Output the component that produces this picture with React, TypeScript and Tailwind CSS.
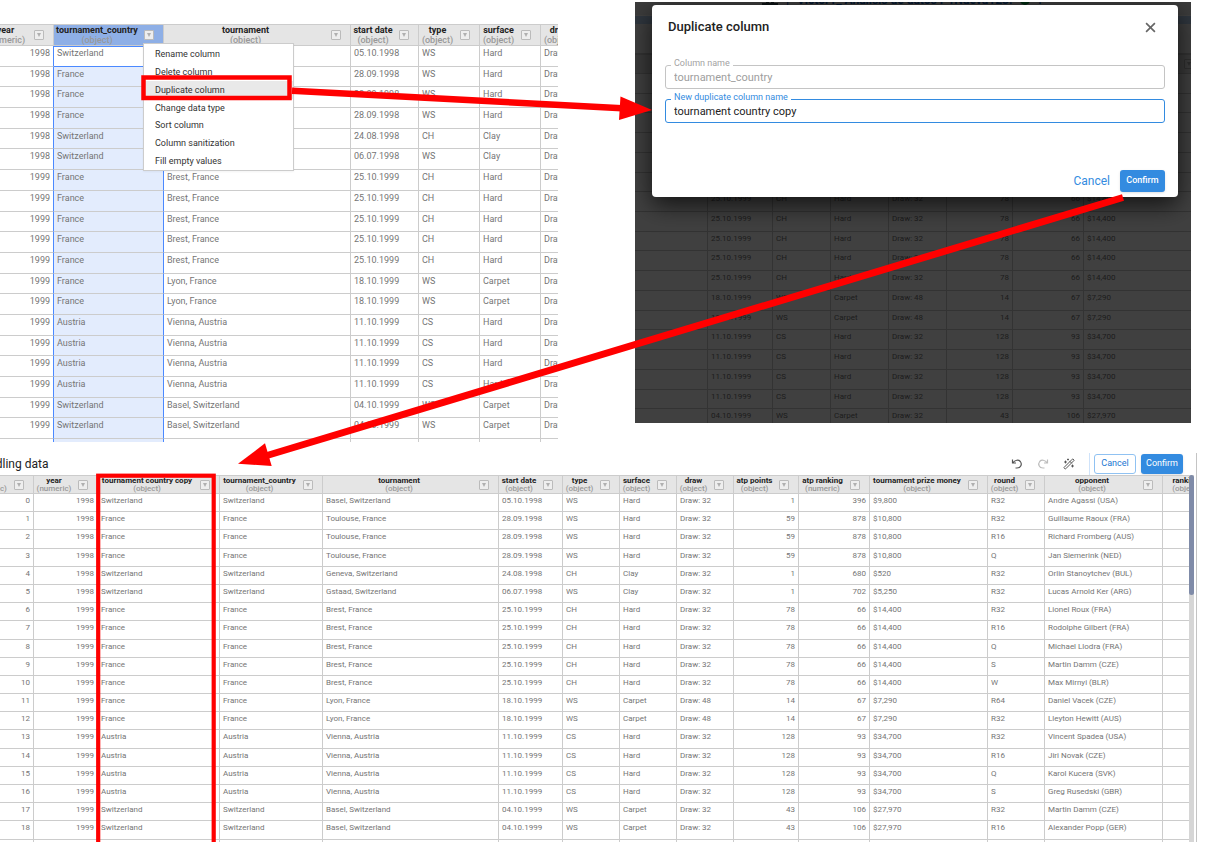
import { useState } from "react"
import { LuWandSparkles } from "react-icons/lu"

type Column = {
  label: string
  kind: "numeric" | "object"
  field: number
  width: number
  right?: boolean
  selected?: boolean
}

// index, year, country, tournament, start date, type, surface, draw, points, ranking, prize, round, opponent
const rows: string[][] = [
  ["0", "1998", "Switzerland", "Basel, Switzerland", "05.10.1998", "WS", "Hard", "Draw: 32", "1", "396", "$9,800", "R32", "Andre Agassi (USA)"],
  ["1", "1998", "France", "Toulouse, France", "28.09.1998", "WS", "Hard", "Draw: 32", "59", "878", "$10,800", "R32", "Guillaume Raoux (FRA)"],
  ["2", "1998", "France", "Toulouse, France", "28.09.1998", "WS", "Hard", "Draw: 32", "59", "878", "$10,800", "R16", "Richard Fromberg (AUS)"],
  ["3", "1998", "France", "Toulouse, France", "28.09.1998", "WS", "Hard", "Draw: 32", "59", "878", "$10,800", "Q", "Jan Siemerink (NED)"],
  ["4", "1998", "Switzerland", "Geneva, Switzerland", "24.08.1998", "CH", "Clay", "Draw: 32", "1", "680", "$520", "R32", "Orlin Stanoytchev (BUL)"],
  ["5", "1998", "Switzerland", "Gstaad, Switzerland", "06.07.1998", "WS", "Clay", "Draw: 32", "1", "702", "$5,250", "R32", "Lucas Arnold Ker (ARG)"],
  ["6", "1999", "France", "Brest, France", "25.10.1999", "CH", "Hard", "Draw: 32", "78", "66", "$14,400", "R32", "Lionel Roux (FRA)"],
  ["7", "1999", "France", "Brest, France", "25.10.1999", "CH", "Hard", "Draw: 32", "78", "66", "$14,400", "R16", "Rodolphe Gilbert (FRA)"],
  ["8", "1999", "France", "Brest, France", "25.10.1999", "CH", "Hard", "Draw: 32", "78", "66", "$14,400", "Q", "Michael Llodra (FRA)"],
  ["9", "1999", "France", "Brest, France", "25.10.1999", "CH", "Hard", "Draw: 32", "78", "66", "$14,400", "S", "Martin Damm (CZE)"],
  ["10", "1999", "France", "Brest, France", "25.10.1999", "CH", "Hard", "Draw: 32", "78", "66", "$14,400", "W", "Max Mirnyi (BLR)"],
  ["11", "1999", "France", "Lyon, France", "18.10.1999", "WS", "Carpet", "Draw: 48", "14", "67", "$7,290", "R64", "Daniel Vacek (CZE)"],
  ["12", "1999", "France", "Lyon, France", "18.10.1999", "WS", "Carpet", "Draw: 48", "14", "67", "$7,290", "R32", "Lleyton Hewitt (AUS)"],
  ["13", "1999", "Austria", "Vienna, Austria", "11.10.1999", "CS", "Hard", "Draw: 32", "128", "93", "$34,700", "R32", "Vincent Spadea (USA)"],
  ["14", "1999", "Austria", "Vienna, Austria", "11.10.1999", "CS", "Hard", "Draw: 32", "128", "93", "$34,700", "R16", "Jiri Novak (CZE)"],
  ["15", "1999", "Austria", "Vienna, Austria", "11.10.1999", "CS", "Hard", "Draw: 32", "128", "93", "$34,700", "Q", "Karol Kucera (SVK)"],
  ["16", "1999", "Austria", "Vienna, Austria", "11.10.1999", "CS", "Hard", "Draw: 32", "128", "93", "$34,700", "S", "Greg Rusedski (GBR)"],
  ["17", "1999", "Switzerland", "Basel, Switzerland", "04.10.1999", "WS", "Carpet", "Draw: 32", "43", "106", "$27,970", "R32", "Martin Damm (CZE)"],
  ["18", "1999", "Switzerland", "Basel, Switzerland", "04.10.1999", "WS", "Carpet", "Draw: 32", "43", "106", "$27,970", "R16", "Alexander Popp (GER)"],
  [],
]

const sourceColumns: Column[] = [
  { label: "year", kind: "numeric", field: 1, width: 73, right: true },
  { label: "tournament_country", kind: "object", field: 2, width: 110, selected: true },
  { label: "tournament", kind: "object", field: 3, width: 187 },
  { label: "start date", kind: "object", field: 4, width: 68 },
  { label: "type", kind: "object", field: 5, width: 61 },
  { label: "surface", kind: "object", field: 6, width: 61 },
  { label: "draw", kind: "object", field: 7, width: 61 },
]

const backdropColumns: Column[] = [
  { label: "tournament", kind: "object", field: -1, width: 180 },
  { label: "start date", kind: "object", field: 4, width: 65 },
  { label: "type", kind: "object", field: 5, width: 58 },
  { label: "surface", kind: "object", field: 6, width: 58 },
  { label: "draw", kind: "object", field: 7, width: 58 },
  { label: "atp points", kind: "object", field: 8, width: 66, right: true },
  { label: "atp ranking", kind: "numeric", field: 9, width: 71, right: true },
  { label: "tournament prize money", kind: "object", field: 10, width: 120 },
]

const resultColumns: Column[] = [
  { label: "start", kind: "numeric", field: 0, width: 65, right: true },
  { label: "year", kind: "numeric", field: 1, width: 64, right: true },
  { label: "tournament country copy", kind: "object", field: 2, width: 122 },
  { label: "tournament_country", kind: "object", field: 2, width: 103 },
  { label: "tournament", kind: "object", field: 3, width: 176 },
  { label: "start date", kind: "object", field: 4, width: 64 },
  { label: "type", kind: "object", field: 5, width: 57 },
  { label: "surface", kind: "object", field: 6, width: 57 },
  { label: "draw", kind: "object", field: 7, width: 57 },
  { label: "atp points", kind: "object", field: 8, width: 65, right: true },
  { label: "atp ranking", kind: "numeric", field: 9, width: 71, right: true },
  { label: "tournament prize money", kind: "object", field: 10, width: 118 },
  { label: "round", kind: "object", field: 11, width: 57 },
  { label: "opponent", kind: "object", field: 12, width: 118 },
  { label: "ranking", kind: "object", field: -1, width: 70 },
]

const menuItems = [
  "Rename column",
  "Delete column",
  "Duplicate column",
  "Change data type",
  "Sort column",
  "Column sanitization",
  "Fill empty values",
]

function cellClass(col: Column, rowIndex: number, beforeSelected?: boolean) {
  if (beforeSelected) return "border-r-[#4b89ff] border-b-[#cccccc]"
  if (col.selected && rowIndex === 0) {
    return "border-[#4b89ff] bg-white shadow-[inset_0_1px_0_#4b89ff]"
  }
  if (col.selected) return "border-r-[#4b89ff] border-b-[#cccccc] bg-[#e3ecfd]"
  return "border-[#cccccc]"
}

function DataTable({
  columns,
  data,
  className,
  headClass,
  cellText,
}: {
  columns: Column[]
  data: string[][]
  className: string
  headClass: string
  cellText: string
}) {
  const total = columns.reduce((sum, col) => sum + col.width, 0)
  return (
    <table
      className={`table-fixed border-separate border-spacing-0 bg-white text-[#757575] ${className}`}
      style={{ width: total }}
    >
      <colgroup>
        {columns.map(col => (
          <col key={col.label} style={{ width: col.width }} />
        ))}
      </colgroup>
      <thead>
        <tr className={headClass}>
          {columns.map(col => (
            <th
              key={col.label}
              className={`border-y border-r border-[#cccccc] p-0 font-normal ${
                col.selected ? "bg-[#8eafe6]" : "bg-[#e5e5e5]"
              }`}
            >
              <div className="flex items-center pr-[9px]">
                <div className="flex-1 pr-1 text-center whitespace-nowrap">
                  <div className="font-bold text-[#222222]">{col.label}</div>
                  <div className="font-medium text-[#999999]">({col.kind})</div>
                </div>
                <button
                  aria-label={`${col.label} menu`}
                  className="flex size-[10px] shrink-0 items-center justify-center rounded-[1px] border border-[#bbbbbb] bg-[#eeeeee]"
                >
                  <svg viewBox="0 0 4 4" className="size-1 fill-[#b0b0b0]">
                    <path d="M0 0h4L2 4z" />
                  </svg>
                </button>
              </div>
            </th>
          ))}
        </tr>
      </thead>
      <tbody>
        {data.map((row, i) => (
          <tr key={i}>
            {columns.map((col, j) => (
              <td
                key={col.label}
                className={`overflow-hidden border-r border-b px-[3px] py-0 align-top whitespace-nowrap ${cellText} ${
                  col.right ? "text-right" : "text-left"
                } ${cellClass(col, i, columns[j + 1]?.selected)}`}
              >
                {row[col.field] ?? "\u00a0"}
              </td>
            ))}
          </tr>
        ))}
      </tbody>
    </table>
  )
}

function ContextMenu() {
  return (
    <div className="absolute top-[43px] left-[143px] flex h-32 w-[151px] flex-col border border-[#cccccc] bg-white pt-px shadow-xs">
      {menuItems.map(item => (
        <button
          key={item}
          className={`min-h-0 flex-1 pl-[11px] text-left text-[9px] leading-[18px] text-[#333333] ${
            item === "Duplicate column" ? "bg-[#e9e9e9]" : ""
          }`}
        >
          {item}
        </button>
      ))}
    </div>
  )
}

function DuplicateDialog() {
  const [name, setName] = useState("tournament country copy")
  return (
    <div
      role="dialog"
      aria-labelledby="dialog-title"
      className="absolute top-[3px] right-[13px] left-[17px] flex h-48 flex-col rounded bg-white px-[13px] pt-[14px] pb-[5px] shadow-[0_8px_24px_rgba(0,0,0,0.7)]"
    >
      <div className="flex items-center justify-between pr-[9px] pl-[3px]">
        <h2 id="dialog-title" className="text-[13px] leading-4 font-medium text-[#222222]">
          Duplicate column
        </h2>
        <button aria-label="Close">
          <svg viewBox="0 0 10 10" className="size-[11px] stroke-[#666666]" strokeWidth="1.5">
            <path d="M1 1l8 8M9 1l-8 8" />
          </svg>
        </button>
      </div>
      <div className="relative mt-[30px]">
        <label
          htmlFor="column-name"
          className="absolute -top-2 left-[6px] bg-white px-[3px] text-[9px] leading-3 text-[#a3a3a3]"
        >
          Column name
        </label>
        <input
          id="column-name"
          disabled
          value="tournament_country"
          className="block h-6 w-full rounded-[3px] border border-[#c4c4c4] px-2 text-[11px] text-[#9e9e9e]"
        />
      </div>
      <div className="relative mt-[10px]">
        <label
          htmlFor="new-name"
          className="absolute -top-2 left-[6px] bg-white px-[3px] text-[9px] leading-3 text-[#338be0]"
        >
          New duplicate column name
        </label>
        <input
          id="new-name"
          autoFocus
          value={name}
          onChange={e => setName(e.target.value)}
          className="block h-6 w-full rounded-[3px] border border-[#338be0] px-2 text-[11px] text-[#222222] outline-none"
        />
      </div>
      <div className="mt-auto flex items-center justify-end gap-[10px]">
        <button className="text-[12px] leading-5 text-[#338be0]">Cancel</button>
        <button className="h-[22px] w-[45px] rounded-[3px] bg-[#338be0] text-[9px] font-medium text-white shadow">
          Confirm
        </button>
      </div>
    </div>
  )
}

function Backdrop() {
  return (
    <section className="relative mt-[2px] h-[421px] overflow-hidden">
      <div className="flex h-[13px] items-end bg-[#f0f0f0] pb-[7px] pl-[127px]">
        <div className="flex items-center gap-2 text-[12px] leading-4 font-bold whitespace-nowrap text-[#1565c0]">
          <svg viewBox="0 0 16 10" className="h-[10px] w-4 fill-[#37474f]">
            <path d="M0 8h4V3h3v5h2V1h3v7h4v2H0z" />
          </svg>
          <span>|</span>
          <span>Victor1_ Análisis de datos P1Nueva123!</span>
          <span className="size-[10px] rounded-full bg-green-600" />
          <span>.</span>
        </div>
      </div>
      <div className="mt-px h-2 bg-[#bcd8f5]" />
      <div className="h-[30px] border-b border-[#cccccc] bg-[#fafafa]" />
      <DataTable
        columns={backdropColumns}
        data={rows.slice(0, 18)}
        className="-ml-[107px] h-[375px] text-[8px] leading-[8px]"
        headClass="h-5"
        cellText="leading-[14px]"
      />
      <div className="absolute inset-0 bg-black/75" />
      <DuplicateDialog />
    </section>
  )
}

function Toolbar() {
  return (
    <div className="flex h-[22px] items-center justify-between pr-[13px] text-[#555555]">
      <h1 className="-ml-[26px] text-[12px] leading-5 text-[#222222]">Handling data</h1>
      <div className="flex items-center">
        <button aria-label="Undo">
          <svg viewBox="0 0 12 12" className="size-3 fill-none stroke-[#555555]" strokeWidth="1.2">
            <path d="M1.5 1.5v3.500h3.500M1.800 4.800C4 1.800 7.500 1.500 9.300 3.500C11.300 6 10 10 6 10H4.500" />
          </svg>
        </button>
        <button aria-label="Redo" className="ml-[14px]">
          <svg viewBox="0 0 12 12" className="size-3 fill-none stroke-[#bdbdbd]" strokeWidth="1.2">
            <path d="M10.500 1.500v3.500H7M10.200 4.800C8 1.800 4.500 1.500 2.700 3.500C.7 6 2 10 6 10h1.500" />
          </svg>
        </button>
        <button aria-label="Transform" className="ml-[14px]">
          <LuWandSparkles className="size-3" />
        </button>
        <div className="ml-[14px] h-[22px] w-px bg-[#cfe3fa]" />
        <button className="ml-1 h-5 w-[42px] rounded-[3px] border border-[#90c2f2] text-[9px] text-[#1976d2]">
          Cancel
        </button>
        <button className="ml-[5px] h-5 w-[42px] rounded-[3px] bg-[#338be0] text-[9px] text-white shadow-sm">
          Confirm
        </button>
      </div>
    </div>
  )
}

// red boxes and arrows which lead from one step to the next
function Annotations() {
  return (
    <svg
      viewBox="0 0 1229 842"
      className="pointer-events-none absolute top-0 left-0 w-full fill-[#ff0000] stroke-[#ff0000]"
    >
      <rect x="143.500" y="77.500" width="146" height="20.500" fill="none" strokeWidth="4.500" />
      <rect x="98.200" y="475.700" width="115.500" height="400" fill="none" strokeWidth="4.200" />
      <path d="M292 90.800L622 108.200" strokeWidth="6.500" />
      <path d="M652 110L620.500 96.500L619 120z" stroke="none" />
      <path d="M1123 197.500L267 455.500" strokeWidth="7" />
      <path d="M238 463.800L265 443.300L271.700 466z" stroke="none" />
    </svg>
  )
}

export default function App() {
  return (
    <main className="relative flex h-screen flex-col overflow-hidden bg-white font-[Roboto,sans-serif]">
      <div className="grid grid-cols-[558fr_556fr] gap-x-[77px] pr-[38px]">
        <section className="relative min-w-0 overflow-hidden pt-6">
          <div className="h-[418px] overflow-hidden">
            <DataTable
              columns={sourceColumns}
              data={rows}
              className="-ml-[19px] h-[436px] text-[9px] leading-[10px]"
              headClass="h-[22px]"
              cellText="leading-[14px]"
            />
          </div>
          <ContextMenu />
        </section>
        <Backdrop />
      </div>
      <section className="mt-[11px] mr-8 flex min-h-0 flex-1 flex-col border-r border-[#c4c4c4]">
        <Toolbar />
        <div className="flex min-h-0 flex-1 pr-[2px]">
          <div className="min-w-0 flex-1 overflow-hidden">
            <DataTable
              columns={resultColumns}
              data={rows}
              className="-ml-[31px] h-[383px] text-[8px] leading-[8px]"
              headClass="h-[19px]"
              cellText="leading-[13px]"
            />
          </div>
          <div className="w-[5px] bg-[#d6d6d6]">
            <div className="h-[120px] rounded-[3px] bg-[#7f8ba8]" />
          </div>
        </div>
      </section>
      <Annotations />
    </main>
  )
}
